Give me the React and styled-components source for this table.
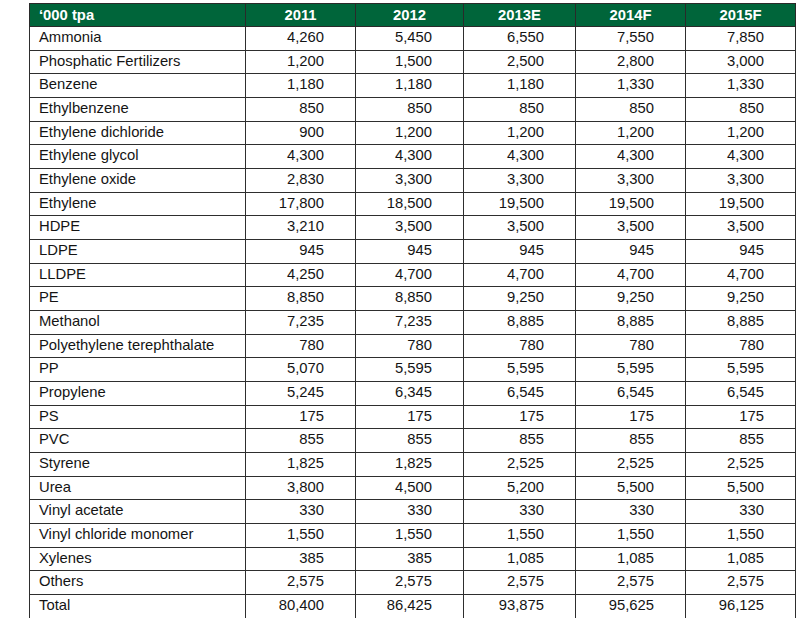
import styled, { createGlobalStyle } from "styled-components";

const GlobalStyle = createGlobalStyle`
  body {
    margin: 0;
    background: #ffffff;
    font-family: "Liberation Sans", Arial, sans-serif;
  }
`;

const Page = styled.div`
  padding: 3px 0 0 29px;
`;

const Table = styled.table`
  border-collapse: collapse;
  table-layout: fixed;
  width: 767px;
  font-size: 14.8px;
  color: #141414;
`;

const HeadCell = styled.th`
  height: 23px;
  padding: 0 0 1px ${(p) => (p.$first ? "9px" : "0")};
  background: #00653a;
  color: #ffffff;
  font-weight: bold;
  text-align: ${(p) => (p.$first ? "left" : "center")};
  border: 1px solid #2a2a2a;
  box-sizing: border-box;
`;

const Cell = styled.td`
  height: 23.68px;
  padding: 0 ${(p) => (p.$label ? "0" : "31px")} 2px ${(p) => (p.$label ? "9px" : "0")};
  text-align: ${(p) => (p.$label ? "left" : "right")};
  border: 1px solid #2e2e2e;
  box-sizing: border-box;
  white-space: nowrap;
  line-height: 1;
`;

const widths = [216, 110, 108, 112, 110, 110];
const headers = ["\u2018000 tpa", "2011", "2012", "2013E", "2014F", "2015F"];

const rows = [
  ["Ammonia", "4,260", "5,450", "6,550", "7,550", "7,850"],
  ["Phosphatic Fertilizers", "1,200", "1,500", "2,500", "2,800", "3,000"],
  ["Benzene", "1,180", "1,180", "1,180", "1,330", "1,330"],
  ["Ethylbenzene", "850", "850", "850", "850", "850"],
  ["Ethylene dichloride", "900", "1,200", "1,200", "1,200", "1,200"],
  ["Ethylene glycol", "4,300", "4,300", "4,300", "4,300", "4,300"],
  ["Ethylene oxide", "2,830", "3,300", "3,300", "3,300", "3,300"],
  ["Ethylene", "17,800", "18,500", "19,500", "19,500", "19,500"],
  ["HDPE", "3,210", "3,500", "3,500", "3,500", "3,500"],
  ["LDPE", "945", "945", "945", "945", "945"],
  ["LLDPE", "4,250", "4,700", "4,700", "4,700", "4,700"],
  ["PE", "8,850", "8,850", "9,250", "9,250", "9,250"],
  ["Methanol", "7,235", "7,235", "8,885", "8,885", "8,885"],
  ["Polyethylene terephthalate", "780", "780", "780", "780", "780"],
  ["PP", "5,070", "5,595", "5,595", "5,595", "5,595"],
  ["Propylene", "5,245", "6,345", "6,545", "6,545", "6,545"],
  ["PS", "175", "175", "175", "175", "175"],
  ["PVC", "855", "855", "855", "855", "855"],
  ["Styrene", "1,825", "1,825", "2,525", "2,525", "2,525"],
  ["Urea", "3,800", "4,500", "5,200", "5,500", "5,500"],
  ["Vinyl acetate", "330", "330", "330", "330", "330"],
  ["Vinyl chloride monomer", "1,550", "1,550", "1,550", "1,550", "1,550"],
  ["Xylenes", "385", "385", "1,085", "1,085", "1,085"],
  ["Others", "2,575", "2,575", "2,575", "2,575", "2,575"],
  ["Total", "80,400", "86,425", "93,875", "95,625", "96,125"],
];

function App() {
  return (
    <>
      <GlobalStyle />
      <Page>
        <Table>
          <colgroup>
            {widths.map((w, i) => (
              <col key={i} style={{ width: w }} />
            ))}
          </colgroup>
          <thead>
            <tr>
              {headers.map((h, i) => (
                <HeadCell key={h} $first={i === 0}>
                  {h}
                </HeadCell>
              ))}
            </tr>
          </thead>
          <tbody>
            {rows.map((row) => (
              <tr key={row[0]}>
                {row.map((v, i) => (
                  <Cell key={i} $label={i === 0}>
                    {v}
                  </Cell>
                ))}
              </tr>
            ))}
          </tbody>
        </Table>
      </Page>
    </>
  );
}

export default App;
